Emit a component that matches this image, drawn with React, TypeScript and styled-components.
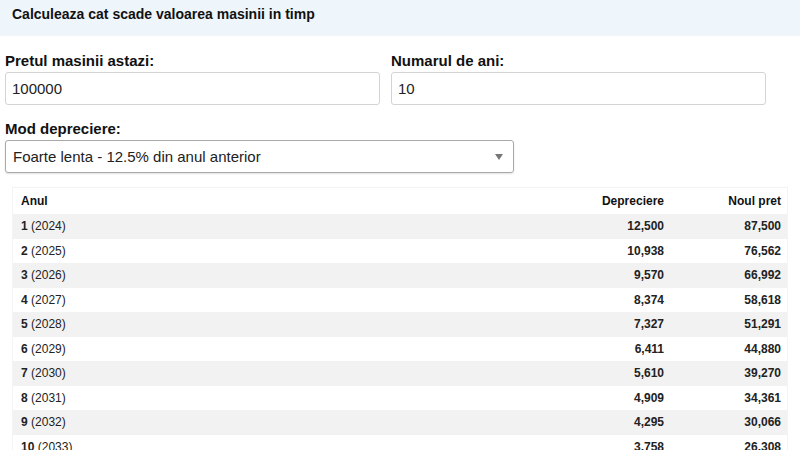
import React from "react";
import styled, { createGlobalStyle } from "styled-components";

const GlobalStyle = createGlobalStyle`
  body {
    margin: 0;
    font-family: "Liberation Sans", Arial, sans-serif;
    color: #111;
    background: #fff;
  }
`;

const rows = [
  { year: 1, label: 2024, dep: "12,500", price: "87,500" },
  { year: 2, label: 2025, dep: "10,938", price: "76,562" },
  { year: 3, label: 2026, dep: "9,570", price: "66,992" },
  { year: 4, label: 2027, dep: "8,374", price: "58,618" },
  { year: 5, label: 2028, dep: "7,327", price: "51,291" },
  { year: 6, label: 2029, dep: "6,411", price: "44,880" },
  { year: 7, label: 2030, dep: "5,610", price: "39,270" },
  { year: 8, label: 2031, dep: "4,909", price: "34,361" },
  { year: 9, label: 2032, dep: "4,295", price: "30,066" },
  { year: 10, label: 2033, dep: "3,758", price: "26,308" },
];

export default function App() {
  return (
    <Page>
      <GlobalStyle />
      <Header>Calculeaza cat scade valoarea masinii in timp</Header>
      <Form>
        <FieldRow>
          <Field>
            <Label>Pretul masinii astazi:</Label>
            <Input defaultValue="100000" />
          </Field>
          <Field>
            <Label>Numarul de ani:</Label>
            <Input defaultValue="10" />
          </Field>
        </FieldRow>
        <Field>
          <Label>Mod depreciere:</Label>
          <SelectBox>
            <span>Foarte lenta - 12.5% din anul anterior</span>
            <Arrow />
          </SelectBox>
        </Field>
      </Form>
      <Table>
        <thead>
          <tr>
            <Th>Anul</Th>
            <Th $num>Depreciere</Th>
            <Th $num>Noul pret</Th>
          </tr>
        </thead>
        <tbody>
          {rows.map((r) => (
            <Tr key={r.year}>
              <Td>
                <b>{r.year}</b> ({r.label})
              </Td>
              <Td $num>
                <b>{r.dep}</b>
              </Td>
              <Td $num>
                <b>{r.price}</b>
              </Td>
            </Tr>
          ))}
        </tbody>
      </Table>
    </Page>
  );
}

const Page = styled.div`
  width: 800px;
  height: 450px;
  overflow: hidden;
`;

const Header = styled.div`
  background: #eef6fc;
  height: 36px;
  padding: 0 12px;
  font-size: 14px;
  font-weight: bold;
  line-height: 28px;
  box-sizing: border-box;
`;

const Form = styled.div`
  padding: 16px 0 0 5px;
  display: flex;
  flex-direction: column;
  gap: 15px;
`;

const FieldRow = styled.div`
  display: grid;
  grid-template-columns: 375px 375px;
  gap: 11px;
`;

const Field = styled.div`
  display: flex;
  flex-direction: column;
`;

const Label = styled.label`
  font-size: 15px;
  font-weight: bold;
  line-height: 18px;
  margin-bottom: 2px;
`;

const Input = styled.input`
  height: 33px;
  box-sizing: border-box;
  border: 1px solid #d4d4d4;
  border-radius: 3px;
  padding: 0 6px;
  font-family: "Liberation Sans", Arial, sans-serif;
  font-size: 15px;
  color: #222;
  outline: none;
`;

const SelectBox = styled.div`
  width: 509px;
  height: 33px;
  box-sizing: border-box;
  border: 1px solid #a9a9a9;
  border-radius: 3px;
  box-shadow: 0 1px 2px rgba(0, 0, 0, 0.12);
  display: flex;
  align-items: center;
  justify-content: space-between;
  padding: 0 8px 0 7px;
  font-size: 15px;
  color: #222;
`;

const Arrow = styled.span`
  width: 0;
  height: 0;
  border-left: 4px solid transparent;
  border-right: 4px solid transparent;
  border-top: 6px solid #777;
  margin-right: 2px;
`;

const Table = styled.table`
  margin: 14px 0 0 12px;
  width: 776px;
  border-collapse: collapse;
  border: 1px solid #f4f4f4;
  font-size: 12px;
`;

const Th = styled.th<{ $num?: boolean }>`
  text-align: ${({ $num }) => ($num ? "right" : "left")};
  width: ${({ $num }) => ($num ? "103px" : "auto")};
  padding: 0 6px 0 8px;
  height: 26px;
  font-weight: bold;
`;

const Tr = styled.tr`
  height: 24.5px;
  &:nth-child(odd) {
    background: #f2f2f2;
  }
`;

const Td = styled.td<{ $num?: boolean }>`
  text-align: ${({ $num }) => ($num ? "right" : "left")};
  padding: 0 6px 0 8px;
  color: #222;
`;
